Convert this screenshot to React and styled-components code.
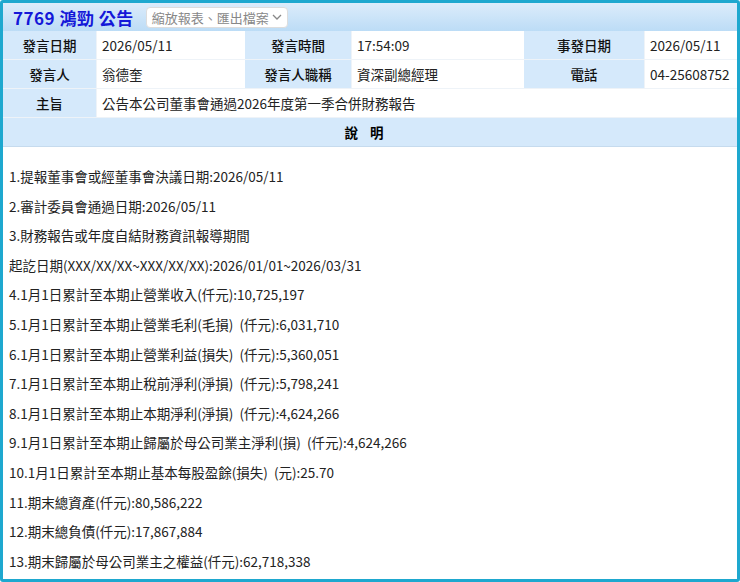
import React from "react";
import styled, { createGlobalStyle } from "styled-components";

const G = createGlobalStyle`
  html,body{margin:0;padding:0;background:#fff;}
  body{font-family:"Noto Sans CJK TC","Noto Sans",sans-serif;}
`;
const Frame = styled.div`
  width:740px;height:582px;box-sizing:border-box;border:3px solid #1ea8cf;border-radius:3px;
  display:flex;flex-direction:column;overflow:hidden;
`;
const Header = styled.div`
  height:28px;flex-shrink:0;display:flex;align-items:center;gap:12px;padding-left:10px;
  background:linear-gradient(#dcecfb,#bcdcf6);
`;
const Title = styled.div`font-weight:700;font-size:17px;color:#1418d8;letter-spacing:0.5px;`;
const Btn = styled.div`
  font-size:13px;color:#888;background:#fff;border:1px solid #ddd;border-radius:4px;
  padding:0 5px;height:19px;line-height:19px;display:flex;align-items:center;gap:3px;
`;
const Table = styled.div`
  display:grid;grid-template-columns:94px 148px 107px 172px 121px 1fr;
  font-size:13.5px;flex-shrink:0;
`;
const Label = styled.div`
  background:#d5e9fb;height:28px;display:flex;align-items:center;justify-content:center;
  border-bottom:1px solid #eef3f8;border-right:1px solid #eef3f8;color:#111;font-weight:500;
`;
const Val = styled.div`
  background:#fff;height:28px;display:flex;align-items:center;padding-left:5px;
  border-bottom:1px solid #eef3f8;color:#222;grid-column:span ${p=>p.span||1};
`;
const Section = styled.div`
  grid-column:1/-1;background:#d5e9fb;height:28px;display:flex;align-items:center;justify-content:center;
  font-weight:600;letter-spacing:12px;border-bottom:1px solid #c6dbee;
`;
const Body = styled.div`padding:15px 0 0 6px;display:flex;flex-direction:column;`;
const Line = styled.div`font-size:13.5px;color:#222;height:29.6px;line-height:29.6px;white-space:pre;`;

const lines = [
"1.提報董事會或經董事會決議日期:2026/05/11",
"2.審計委員會通過日期:2026/05/11",
"3.財務報告或年度自結財務資訊報導期間",
"起訖日期(XXX/XX/XX~XXX/XX/XX):2026/01/01~2026/03/31",
"4.1月1日累計至本期止營業收入(仟元):10,725,197",
"5.1月1日累計至本期止營業毛利(毛損)  (仟元):6,031,710",
"6.1月1日累計至本期止營業利益(損失)  (仟元):5,360,051",
"7.1月1日累計至本期止稅前淨利(淨損)  (仟元):5,798,241",
"8.1月1日累計至本期止本期淨利(淨損)  (仟元):4,624,266",
"9.1月1日累計至本期止歸屬於母公司業主淨利(損)  (仟元):4,624,266",
"10.1月1日累計至本期止基本每股盈餘(損失)  (元):25.70",
"11.期末總資產(仟元):80,586,222",
"12.期末總負債(仟元):17,867,884",
"13.期末歸屬於母公司業主之權益(仟元):62,718,338",
"14.其他應敘明事項:無。",
];

export default function App(){
  return (<>
    <G/>
    <Frame>
      <Header>
        <Title>7769 鴻勁 公告</Title>
        <Btn>縮放報表、匯出檔案
          <svg width="10" height="8" viewBox="0 0 10 8"><path d="M1 2l4 4 4-4" fill="none" stroke="#888" strokeWidth="1.3"/></svg>
        </Btn>
      </Header>
      <Table>
        <Label>發言日期</Label><Val>2026/05/11</Val>
        <Label>發言時間</Label><Val>17:54:09</Val>
        <Label>事發日期</Label><Val>2026/05/11</Val>
        <Label>發言人</Label><Val>翁德奎</Val>
        <Label>發言人職稱</Label><Val>資深副總經理</Val>
        <Label>電話</Label><Val>04-25608752</Val>
        <Label>主旨</Label><Val span={5}>公告本公司董事會通過2026年度第一季合併財務報告</Val>
        <Section>說明</Section>
      </Table>
      <Body>{lines.map((l,i)=><Line key={i}>{l}</Line>)}</Body>
    </Frame>
  </>);
}
